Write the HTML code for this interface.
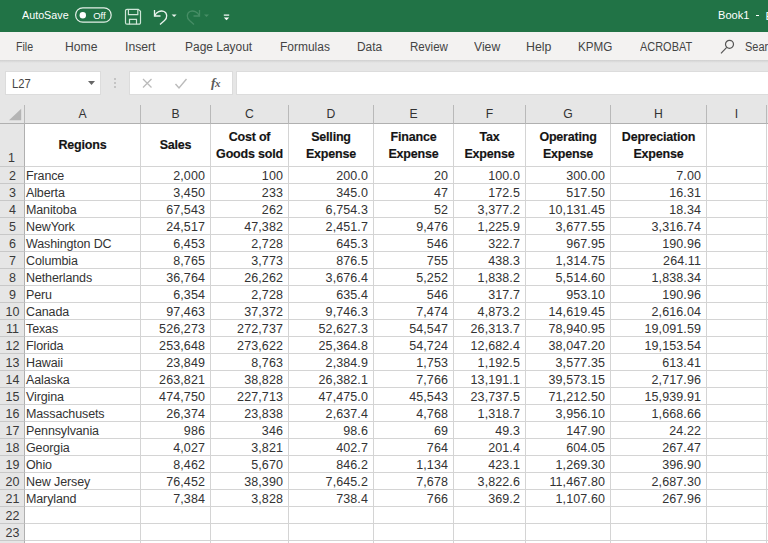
<!DOCTYPE html>
<html><head><meta charset="utf-8"><title>Excel</title>
<style>
html,body{margin:0;padding:0;}
body{width:768px;height:543px;overflow:hidden;position:relative;background:#e6e6e6;font-family:"Liberation Sans",sans-serif;}
.abs{position:absolute;}
#title{left:0;top:0;width:768px;height:32px;background:#217346;}
#title .t{position:absolute;color:#fff;font-size:11.5px;top:9px;white-space:nowrap;transform-origin:0 0;}
#ribbon{left:0;top:32px;width:768px;height:28px;background:#f3f2f1;}
#ribbon span{position:absolute;top:8px;font-size:12.5px;color:#444;white-space:nowrap;transform-origin:0 0;}
#shadow{left:0;top:60px;width:768px;height:3px;background:linear-gradient(#d0d0d0,#e6e6e6);}
#namebox{left:5px;top:71px;width:94px;height:22px;background:#fff;border:1px solid #dcdcdc;}
#fxbox{left:129px;top:71px;width:102px;height:22px;background:#fff;border:1px solid #dcdcdc;}
#fbar{left:236px;top:71px;width:540px;height:22px;background:#fff;border:1px solid #dcdcdc;}
#grid{left:0;top:105px;width:768px;height:438px;background:#fff;}
.ch{position:absolute;top:0;height:19px;padding-top:0.800px;background:#e6e6e6;border-right:1px solid #b9b9b9;border-bottom:1px solid #b0b0b0;box-sizing:border-box;text-align:center;font-size:12.200px;line-height:16px;color:#333;}
.rh{position:absolute;left:0;width:25px;background:#e6e6e6;border-right:1px solid #b0b0b0;border-bottom:1px solid #c8c8c8;box-sizing:border-box;text-align:center;font-size:12.500px;padding-left:1px;color:#3a3a3a;}
.c{position:absolute;box-sizing:border-box;border-right:1px solid #d4d4d4;border-bottom:1px solid #d4d4d4;font-size:12.5px;letter-spacing:-0.12px;line-height:17px;padding-top:0px;color:#333;white-space:nowrap;overflow:hidden;}
.h{font-weight:bold;text-align:center;font-size:12.5px;letter-spacing:-0.2px;line-height:16.7px;padding-top:2px;color:#141414;-webkit-text-stroke:0.15px #141414;display:flex;align-items:center;justify-content:center;}
.n{text-align:right;letter-spacing:0.1px;}
.t{display:inline-block;transform:translateY(0.6px);}
</style></head><body>
<div id="title" class="abs">
<span class="t" style="left:21.500px;transform:scaleX(0.935)">AutoSave</span>
<svg class="abs" style="left:74px;top:6px" width="40" height="20" viewBox="0 0 40 20"><rect x="1.600" y="1.800" width="35.600" height="14.400" rx="7.200" fill="none" stroke="#e4efe8" stroke-width="1.200"/><circle cx="8.800" cy="9.200" r="3.200" fill="#fff"/><text x="19.200" y="12.600" font-family="Liberation Sans" font-size="9.500" textLength="12.500" lengthAdjust="spacingAndGlyphs" fill="#fff">Off</text></svg>
<svg class="abs" style="left:124px;top:8px" width="18" height="18" viewBox="0 0 18 18" fill="none" stroke="#cfe6d8" stroke-width="1.200"><path d="M3 1.300h11.200l2.300 2v11.400a1.500 1.500 0 0 1 -1.500 1.500h-12a1.500 1.500 0 0 1 -1.500 -1.500v-11.900a1.500 1.500 0 0 1 1.500 -1.500z"/><path d="M4.400 1.300v5.400h9.400v-5.400M5.500 16.200v-4.900h7v4.900"/></svg>
<svg class="abs" style="left:152px;top:8px" width="28" height="18" viewBox="0 0 28 18" fill="none" stroke="#eaf4ee" stroke-width="1.3"><path d="M2.500 2v6h6"/><path d="M2.500 8c2-4 6-6 9.500-4.500c3.500 1.600 3.500 6.500 0.500 9l-4.500 4"/><path d="M19.600 6.500h5l-2.500 2.500z" fill="#eaf4ee" stroke="none"/></svg>
<svg class="abs" style="left:184px;top:8px" width="28" height="18" viewBox="0 0 28 18" fill="none" stroke="#468d65" stroke-width="1.3"><path d="M15.500 2v6h-6"/><path d="M15.500 8c-2-4-6-6-9.500-4.500c-3.500 1.600-3.500 6.500-0.500 9l4.500 4"/><path d="M20 6.500h5l-2.500 2.500z" fill="#468d65" stroke="none"/></svg>
<svg class="abs" style="left:222px;top:13.500px" width="10" height="8" viewBox="0 0 10 8"><rect x="1.800" y="0.500" width="5.400" height="1.200" fill="#fff"/><path d="M1.800 3.500h5.400l-2.700 2.700z" fill="#fff"/></svg>
<span class="t" style="left:718.200px;transform:scaleX(0.962)">Book1</span><div class="abs" style="left:755.500px;top:14.800px;width:3.700px;height:1.100px;background:#fff"></div><span class="t" style="left:765.500px">E</span>
</div>
<div id="ribbon" class="abs">
<span style="left:16.1px;transform:scaleX(0.850)">File</span><span style="left:65.0px;transform:scaleX(0.972)">Home</span><span style="left:124.9px;transform:scaleX(0.975)">Insert</span><span style="left:184.7px;transform:scaleX(0.957)">Page Layout</span><span style="left:280.0px;transform:scaleX(0.958)">Formulas</span><span style="left:357.3px;transform:scaleX(0.950)">Data</span><span style="left:410.0px;transform:scaleX(0.925)">Review</span><span style="left:474.1px;transform:scaleX(0.975)">View</span><span style="left:526.1px;transform:scaleX(0.988)">Help</span><span style="left:578.0px;transform:scaleX(0.935)">KPMG</span><span style="left:639.6px;transform:scaleX(0.876)">ACROBAT</span><span style="left:745.1px;transform:scaleX(0.880)">Search</span>
<svg class="abs" style="left:719px;top:6px" width="18" height="18" viewBox="0 0 18 18" fill="none" stroke="#555" stroke-width="1.200"><circle cx="10.500" cy="6.300" r="4"/><path d="M7.700 9.300l-5.700 6"/></svg>
</div>
<div id="shadow" class="abs"></div>
<div id="namebox" class="abs"><span class="abs" style="left:6px;top:5px;font-size:12.500px;color:#444;transform:scaleX(0.9);transform-origin:0 0">L27</span>
<svg class="abs" style="left:81px;top:8px" width="9" height="6" viewBox="0 0 9 6"><path d="M1 1h7l-3.500 4z" fill="#666"/></svg></div>
<svg class="abs" style="left:112px;top:77px" width="6" height="12" viewBox="0 0 6 12"><circle cx="3" cy="2" r="0.800" fill="#999"/><circle cx="3" cy="6" r="0.800" fill="#999"/><circle cx="3" cy="10" r="0.800" fill="#999"/></svg>
<div id="fxbox" class="abs">
<svg class="abs" style="left:11px;top:5px" width="13" height="13" viewBox="0 0 13 13" stroke="#bbb" stroke-width="1.300" fill="none"><path d="M2 2l8.500 8.500M10.500 2l-8.500 8.500"/></svg>
<svg class="abs" style="left:44px;top:5px" width="14" height="13" viewBox="0 0 14 13" stroke="#bbb" stroke-width="1.400" fill="none"><path d="M1.500 7l3.500 4l7.500-9"/></svg>
<span class="abs" style="left:81px;top:2.500px;font-family:'Liberation Serif',serif;font-style:italic;font-weight:bold;font-size:13.500px;color:#5a5a5a;letter-spacing:-0.500px">f<span style="font-size:11px;position:relative;top:0.500px">x</span></span>
</div>
<div id="fbar" class="abs"></div>
<div id="grid" class="abs">

<div class="ch" style="left:0;width:25px"><svg width="23" height="16" viewBox="0 0 23 16" style="position:absolute;left:0;top:0"><path d="M21.200 3.800v11.400h-12.200z" fill="#b5b5b5"/></svg></div>
<div class="ch" style="left:25px;width:116px">A</div>
<div class="ch" style="left:141px;width:70px">B</div>
<div class="ch" style="left:211px;width:78px">C</div>
<div class="ch" style="left:289px;width:85px">D</div>
<div class="ch" style="left:374px;width:80px">E</div>
<div class="ch" style="left:454px;width:72px">F</div>
<div class="ch" style="left:526px;width:85px">G</div>
<div class="ch" style="left:611px;width:96px">H</div>
<div class="ch" style="left:707px;width:60px">I</div>
<div class="ch" style="left:767px;width:64px">J</div>
<div class="rh" style="top:19px;height:43px;line-height:43px"><span style="position:absolute;left:0;width:23px;bottom:0px;line-height:16px">1</span></div>
<div class="c h" style="left:25px;top:19px;width:116px;height:43px;padding-top:0px;"><span>Regions</span></div>
<div class="c h" style="left:141px;top:19px;width:70px;height:43px;padding-top:0px;"><span>Sales</span></div>
<div class="c h" style="left:211px;top:19px;width:78px;height:43px;"><span>Cost of<br>Goods sold</span></div>
<div class="c h" style="left:289px;top:19px;width:85px;height:43px;"><span>Selling<br>Expense</span></div>
<div class="c h" style="left:374px;top:19px;width:80px;height:43px;"><span>Finance<br>Expense</span></div>
<div class="c h" style="left:454px;top:19px;width:72px;height:43px;"><span>Tax<br>Expense</span></div>
<div class="c h" style="left:526px;top:19px;width:85px;height:43px;"><span>Operating<br>Expense</span></div>
<div class="c h" style="left:611px;top:19px;width:96px;height:43px;"><span>Depreciation<br>Expense</span></div>
<div class="c h" style="left:707px;top:19px;width:60px;height:43px;padding-top:0px;"><span></span></div>
<div class="c h" style="left:767px;top:19px;width:64px;height:43px;padding-top:0px;"><span></span></div>
<div class="rh" style="top:62px;height:17px;line-height:17px"><span style="display:inline-block;position:relative;top:1px">2</span></div>
<div class="c" style="left:25px;top:62px;width:116px;height:17px;padding-left:1px"><span class="t">France</span></div>
<div class="c n" style="left:141px;top:62px;width:70px;height:17px;padding-right:5px"><span class="t">2,000</span></div>
<div class="c n" style="left:211px;top:62px;width:78px;height:17px;padding-right:5px"><span class="t">100</span></div>
<div class="c n" style="left:289px;top:62px;width:85px;height:17px;padding-right:5px"><span class="t">200.0</span></div>
<div class="c n" style="left:374px;top:62px;width:80px;height:17px;padding-right:5px"><span class="t">20</span></div>
<div class="c n" style="left:454px;top:62px;width:72px;height:17px;padding-right:5px"><span class="t">100.0</span></div>
<div class="c n" style="left:526px;top:62px;width:85px;height:17px;padding-right:5px"><span class="t">300.00</span></div>
<div class="c n" style="left:611px;top:62px;width:96px;height:17px;padding-right:5px"><span class="t">7.00</span></div>
<div class="c" style="left:707px;top:62px;width:60px;height:17px"></div>
<div class="c" style="left:767px;top:62px;width:64px;height:17px"></div>
<div class="rh" style="top:79px;height:17px;line-height:17px"><span style="display:inline-block;position:relative;top:1px">3</span></div>
<div class="c" style="left:25px;top:79px;width:116px;height:17px;padding-left:1px"><span class="t">Alberta</span></div>
<div class="c n" style="left:141px;top:79px;width:70px;height:17px;padding-right:5px"><span class="t">3,450</span></div>
<div class="c n" style="left:211px;top:79px;width:78px;height:17px;padding-right:5px"><span class="t">233</span></div>
<div class="c n" style="left:289px;top:79px;width:85px;height:17px;padding-right:5px"><span class="t">345.0</span></div>
<div class="c n" style="left:374px;top:79px;width:80px;height:17px;padding-right:5px"><span class="t">47</span></div>
<div class="c n" style="left:454px;top:79px;width:72px;height:17px;padding-right:5px"><span class="t">172.5</span></div>
<div class="c n" style="left:526px;top:79px;width:85px;height:17px;padding-right:5px"><span class="t">517.50</span></div>
<div class="c n" style="left:611px;top:79px;width:96px;height:17px;padding-right:5px"><span class="t">16.31</span></div>
<div class="c" style="left:707px;top:79px;width:60px;height:17px"></div>
<div class="c" style="left:767px;top:79px;width:64px;height:17px"></div>
<div class="rh" style="top:96px;height:17px;line-height:17px"><span style="display:inline-block;position:relative;top:1px">4</span></div>
<div class="c" style="left:25px;top:96px;width:116px;height:17px;padding-left:1px"><span class="t">Manitoba</span></div>
<div class="c n" style="left:141px;top:96px;width:70px;height:17px;padding-right:5px"><span class="t">67,543</span></div>
<div class="c n" style="left:211px;top:96px;width:78px;height:17px;padding-right:5px"><span class="t">262</span></div>
<div class="c n" style="left:289px;top:96px;width:85px;height:17px;padding-right:5px"><span class="t">6,754.3</span></div>
<div class="c n" style="left:374px;top:96px;width:80px;height:17px;padding-right:5px"><span class="t">52</span></div>
<div class="c n" style="left:454px;top:96px;width:72px;height:17px;padding-right:5px"><span class="t">3,377.2</span></div>
<div class="c n" style="left:526px;top:96px;width:85px;height:17px;padding-right:5px"><span class="t">10,131.45</span></div>
<div class="c n" style="left:611px;top:96px;width:96px;height:17px;padding-right:5px"><span class="t">18.34</span></div>
<div class="c" style="left:707px;top:96px;width:60px;height:17px"></div>
<div class="c" style="left:767px;top:96px;width:64px;height:17px"></div>
<div class="rh" style="top:113px;height:17px;line-height:17px"><span style="display:inline-block;position:relative;top:1px">5</span></div>
<div class="c" style="left:25px;top:113px;width:116px;height:17px;padding-left:1px"><span class="t">NewYork</span></div>
<div class="c n" style="left:141px;top:113px;width:70px;height:17px;padding-right:5px"><span class="t">24,517</span></div>
<div class="c n" style="left:211px;top:113px;width:78px;height:17px;padding-right:5px"><span class="t">47,382</span></div>
<div class="c n" style="left:289px;top:113px;width:85px;height:17px;padding-right:5px"><span class="t">2,451.7</span></div>
<div class="c n" style="left:374px;top:113px;width:80px;height:17px;padding-right:5px"><span class="t">9,476</span></div>
<div class="c n" style="left:454px;top:113px;width:72px;height:17px;padding-right:5px"><span class="t">1,225.9</span></div>
<div class="c n" style="left:526px;top:113px;width:85px;height:17px;padding-right:5px"><span class="t">3,677.55</span></div>
<div class="c n" style="left:611px;top:113px;width:96px;height:17px;padding-right:5px"><span class="t">3,316.74</span></div>
<div class="c" style="left:707px;top:113px;width:60px;height:17px"></div>
<div class="c" style="left:767px;top:113px;width:64px;height:17px"></div>
<div class="rh" style="top:130px;height:17px;line-height:17px"><span style="display:inline-block;position:relative;top:1px">6</span></div>
<div class="c" style="left:25px;top:130px;width:116px;height:17px;padding-left:1px"><span class="t">Washington DC</span></div>
<div class="c n" style="left:141px;top:130px;width:70px;height:17px;padding-right:5px"><span class="t">6,453</span></div>
<div class="c n" style="left:211px;top:130px;width:78px;height:17px;padding-right:5px"><span class="t">2,728</span></div>
<div class="c n" style="left:289px;top:130px;width:85px;height:17px;padding-right:5px"><span class="t">645.3</span></div>
<div class="c n" style="left:374px;top:130px;width:80px;height:17px;padding-right:5px"><span class="t">546</span></div>
<div class="c n" style="left:454px;top:130px;width:72px;height:17px;padding-right:5px"><span class="t">322.7</span></div>
<div class="c n" style="left:526px;top:130px;width:85px;height:17px;padding-right:5px"><span class="t">967.95</span></div>
<div class="c n" style="left:611px;top:130px;width:96px;height:17px;padding-right:5px"><span class="t">190.96</span></div>
<div class="c" style="left:707px;top:130px;width:60px;height:17px"></div>
<div class="c" style="left:767px;top:130px;width:64px;height:17px"></div>
<div class="rh" style="top:147px;height:17px;line-height:17px"><span style="display:inline-block;position:relative;top:1px">7</span></div>
<div class="c" style="left:25px;top:147px;width:116px;height:17px;padding-left:1px"><span class="t">Columbia</span></div>
<div class="c n" style="left:141px;top:147px;width:70px;height:17px;padding-right:5px"><span class="t">8,765</span></div>
<div class="c n" style="left:211px;top:147px;width:78px;height:17px;padding-right:5px"><span class="t">3,773</span></div>
<div class="c n" style="left:289px;top:147px;width:85px;height:17px;padding-right:5px"><span class="t">876.5</span></div>
<div class="c n" style="left:374px;top:147px;width:80px;height:17px;padding-right:5px"><span class="t">755</span></div>
<div class="c n" style="left:454px;top:147px;width:72px;height:17px;padding-right:5px"><span class="t">438.3</span></div>
<div class="c n" style="left:526px;top:147px;width:85px;height:17px;padding-right:5px"><span class="t">1,314.75</span></div>
<div class="c n" style="left:611px;top:147px;width:96px;height:17px;padding-right:5px"><span class="t">264.11</span></div>
<div class="c" style="left:707px;top:147px;width:60px;height:17px"></div>
<div class="c" style="left:767px;top:147px;width:64px;height:17px"></div>
<div class="rh" style="top:164px;height:17px;line-height:17px"><span style="display:inline-block;position:relative;top:1px">8</span></div>
<div class="c" style="left:25px;top:164px;width:116px;height:17px;padding-left:1px"><span class="t">Netherlands</span></div>
<div class="c n" style="left:141px;top:164px;width:70px;height:17px;padding-right:5px"><span class="t">36,764</span></div>
<div class="c n" style="left:211px;top:164px;width:78px;height:17px;padding-right:5px"><span class="t">26,262</span></div>
<div class="c n" style="left:289px;top:164px;width:85px;height:17px;padding-right:5px"><span class="t">3,676.4</span></div>
<div class="c n" style="left:374px;top:164px;width:80px;height:17px;padding-right:5px"><span class="t">5,252</span></div>
<div class="c n" style="left:454px;top:164px;width:72px;height:17px;padding-right:5px"><span class="t">1,838.2</span></div>
<div class="c n" style="left:526px;top:164px;width:85px;height:17px;padding-right:5px"><span class="t">5,514.60</span></div>
<div class="c n" style="left:611px;top:164px;width:96px;height:17px;padding-right:5px"><span class="t">1,838.34</span></div>
<div class="c" style="left:707px;top:164px;width:60px;height:17px"></div>
<div class="c" style="left:767px;top:164px;width:64px;height:17px"></div>
<div class="rh" style="top:181px;height:17px;line-height:17px"><span style="display:inline-block;position:relative;top:1px">9</span></div>
<div class="c" style="left:25px;top:181px;width:116px;height:17px;padding-left:1px"><span class="t">Peru</span></div>
<div class="c n" style="left:141px;top:181px;width:70px;height:17px;padding-right:5px"><span class="t">6,354</span></div>
<div class="c n" style="left:211px;top:181px;width:78px;height:17px;padding-right:5px"><span class="t">2,728</span></div>
<div class="c n" style="left:289px;top:181px;width:85px;height:17px;padding-right:5px"><span class="t">635.4</span></div>
<div class="c n" style="left:374px;top:181px;width:80px;height:17px;padding-right:5px"><span class="t">546</span></div>
<div class="c n" style="left:454px;top:181px;width:72px;height:17px;padding-right:5px"><span class="t">317.7</span></div>
<div class="c n" style="left:526px;top:181px;width:85px;height:17px;padding-right:5px"><span class="t">953.10</span></div>
<div class="c n" style="left:611px;top:181px;width:96px;height:17px;padding-right:5px"><span class="t">190.96</span></div>
<div class="c" style="left:707px;top:181px;width:60px;height:17px"></div>
<div class="c" style="left:767px;top:181px;width:64px;height:17px"></div>
<div class="rh" style="top:198px;height:17px;line-height:17px"><span style="display:inline-block;position:relative;top:1px">10</span></div>
<div class="c" style="left:25px;top:198px;width:116px;height:17px;padding-left:1px"><span class="t">Canada</span></div>
<div class="c n" style="left:141px;top:198px;width:70px;height:17px;padding-right:5px"><span class="t">97,463</span></div>
<div class="c n" style="left:211px;top:198px;width:78px;height:17px;padding-right:5px"><span class="t">37,372</span></div>
<div class="c n" style="left:289px;top:198px;width:85px;height:17px;padding-right:5px"><span class="t">9,746.3</span></div>
<div class="c n" style="left:374px;top:198px;width:80px;height:17px;padding-right:5px"><span class="t">7,474</span></div>
<div class="c n" style="left:454px;top:198px;width:72px;height:17px;padding-right:5px"><span class="t">4,873.2</span></div>
<div class="c n" style="left:526px;top:198px;width:85px;height:17px;padding-right:5px"><span class="t">14,619.45</span></div>
<div class="c n" style="left:611px;top:198px;width:96px;height:17px;padding-right:5px"><span class="t">2,616.04</span></div>
<div class="c" style="left:707px;top:198px;width:60px;height:17px"></div>
<div class="c" style="left:767px;top:198px;width:64px;height:17px"></div>
<div class="rh" style="top:215px;height:17px;line-height:17px"><span style="display:inline-block;position:relative;top:1px">11</span></div>
<div class="c" style="left:25px;top:215px;width:116px;height:17px;padding-left:1px"><span class="t">Texas</span></div>
<div class="c n" style="left:141px;top:215px;width:70px;height:17px;padding-right:5px"><span class="t">526,273</span></div>
<div class="c n" style="left:211px;top:215px;width:78px;height:17px;padding-right:5px"><span class="t">272,737</span></div>
<div class="c n" style="left:289px;top:215px;width:85px;height:17px;padding-right:5px"><span class="t">52,627.3</span></div>
<div class="c n" style="left:374px;top:215px;width:80px;height:17px;padding-right:5px"><span class="t">54,547</span></div>
<div class="c n" style="left:454px;top:215px;width:72px;height:17px;padding-right:5px"><span class="t">26,313.7</span></div>
<div class="c n" style="left:526px;top:215px;width:85px;height:17px;padding-right:5px"><span class="t">78,940.95</span></div>
<div class="c n" style="left:611px;top:215px;width:96px;height:17px;padding-right:5px"><span class="t">19,091.59</span></div>
<div class="c" style="left:707px;top:215px;width:60px;height:17px"></div>
<div class="c" style="left:767px;top:215px;width:64px;height:17px"></div>
<div class="rh" style="top:232px;height:17px;line-height:17px"><span style="display:inline-block;position:relative;top:1px">12</span></div>
<div class="c" style="left:25px;top:232px;width:116px;height:17px;padding-left:1px"><span class="t">Florida</span></div>
<div class="c n" style="left:141px;top:232px;width:70px;height:17px;padding-right:5px"><span class="t">253,648</span></div>
<div class="c n" style="left:211px;top:232px;width:78px;height:17px;padding-right:5px"><span class="t">273,622</span></div>
<div class="c n" style="left:289px;top:232px;width:85px;height:17px;padding-right:5px"><span class="t">25,364.8</span></div>
<div class="c n" style="left:374px;top:232px;width:80px;height:17px;padding-right:5px"><span class="t">54,724</span></div>
<div class="c n" style="left:454px;top:232px;width:72px;height:17px;padding-right:5px"><span class="t">12,682.4</span></div>
<div class="c n" style="left:526px;top:232px;width:85px;height:17px;padding-right:5px"><span class="t">38,047.20</span></div>
<div class="c n" style="left:611px;top:232px;width:96px;height:17px;padding-right:5px"><span class="t">19,153.54</span></div>
<div class="c" style="left:707px;top:232px;width:60px;height:17px"></div>
<div class="c" style="left:767px;top:232px;width:64px;height:17px"></div>
<div class="rh" style="top:249px;height:17px;line-height:17px"><span style="display:inline-block;position:relative;top:1px">13</span></div>
<div class="c" style="left:25px;top:249px;width:116px;height:17px;padding-left:1px"><span class="t">Hawaii</span></div>
<div class="c n" style="left:141px;top:249px;width:70px;height:17px;padding-right:5px"><span class="t">23,849</span></div>
<div class="c n" style="left:211px;top:249px;width:78px;height:17px;padding-right:5px"><span class="t">8,763</span></div>
<div class="c n" style="left:289px;top:249px;width:85px;height:17px;padding-right:5px"><span class="t">2,384.9</span></div>
<div class="c n" style="left:374px;top:249px;width:80px;height:17px;padding-right:5px"><span class="t">1,753</span></div>
<div class="c n" style="left:454px;top:249px;width:72px;height:17px;padding-right:5px"><span class="t">1,192.5</span></div>
<div class="c n" style="left:526px;top:249px;width:85px;height:17px;padding-right:5px"><span class="t">3,577.35</span></div>
<div class="c n" style="left:611px;top:249px;width:96px;height:17px;padding-right:5px"><span class="t">613.41</span></div>
<div class="c" style="left:707px;top:249px;width:60px;height:17px"></div>
<div class="c" style="left:767px;top:249px;width:64px;height:17px"></div>
<div class="rh" style="top:266px;height:17px;line-height:17px"><span style="display:inline-block;position:relative;top:1px">14</span></div>
<div class="c" style="left:25px;top:266px;width:116px;height:17px;padding-left:1px"><span class="t">Aalaska</span></div>
<div class="c n" style="left:141px;top:266px;width:70px;height:17px;padding-right:5px"><span class="t">263,821</span></div>
<div class="c n" style="left:211px;top:266px;width:78px;height:17px;padding-right:5px"><span class="t">38,828</span></div>
<div class="c n" style="left:289px;top:266px;width:85px;height:17px;padding-right:5px"><span class="t">26,382.1</span></div>
<div class="c n" style="left:374px;top:266px;width:80px;height:17px;padding-right:5px"><span class="t">7,766</span></div>
<div class="c n" style="left:454px;top:266px;width:72px;height:17px;padding-right:5px"><span class="t">13,191.1</span></div>
<div class="c n" style="left:526px;top:266px;width:85px;height:17px;padding-right:5px"><span class="t">39,573.15</span></div>
<div class="c n" style="left:611px;top:266px;width:96px;height:17px;padding-right:5px"><span class="t">2,717.96</span></div>
<div class="c" style="left:707px;top:266px;width:60px;height:17px"></div>
<div class="c" style="left:767px;top:266px;width:64px;height:17px"></div>
<div class="rh" style="top:283px;height:17px;line-height:17px"><span style="display:inline-block;position:relative;top:1px">15</span></div>
<div class="c" style="left:25px;top:283px;width:116px;height:17px;padding-left:1px"><span class="t">Virgina</span></div>
<div class="c n" style="left:141px;top:283px;width:70px;height:17px;padding-right:5px"><span class="t">474,750</span></div>
<div class="c n" style="left:211px;top:283px;width:78px;height:17px;padding-right:5px"><span class="t">227,713</span></div>
<div class="c n" style="left:289px;top:283px;width:85px;height:17px;padding-right:5px"><span class="t">47,475.0</span></div>
<div class="c n" style="left:374px;top:283px;width:80px;height:17px;padding-right:5px"><span class="t">45,543</span></div>
<div class="c n" style="left:454px;top:283px;width:72px;height:17px;padding-right:5px"><span class="t">23,737.5</span></div>
<div class="c n" style="left:526px;top:283px;width:85px;height:17px;padding-right:5px"><span class="t">71,212.50</span></div>
<div class="c n" style="left:611px;top:283px;width:96px;height:17px;padding-right:5px"><span class="t">15,939.91</span></div>
<div class="c" style="left:707px;top:283px;width:60px;height:17px"></div>
<div class="c" style="left:767px;top:283px;width:64px;height:17px"></div>
<div class="rh" style="top:300px;height:17px;line-height:17px"><span style="display:inline-block;position:relative;top:1px">16</span></div>
<div class="c" style="left:25px;top:300px;width:116px;height:17px;padding-left:1px"><span class="t">Massachusets</span></div>
<div class="c n" style="left:141px;top:300px;width:70px;height:17px;padding-right:5px"><span class="t">26,374</span></div>
<div class="c n" style="left:211px;top:300px;width:78px;height:17px;padding-right:5px"><span class="t">23,838</span></div>
<div class="c n" style="left:289px;top:300px;width:85px;height:17px;padding-right:5px"><span class="t">2,637.4</span></div>
<div class="c n" style="left:374px;top:300px;width:80px;height:17px;padding-right:5px"><span class="t">4,768</span></div>
<div class="c n" style="left:454px;top:300px;width:72px;height:17px;padding-right:5px"><span class="t">1,318.7</span></div>
<div class="c n" style="left:526px;top:300px;width:85px;height:17px;padding-right:5px"><span class="t">3,956.10</span></div>
<div class="c n" style="left:611px;top:300px;width:96px;height:17px;padding-right:5px"><span class="t">1,668.66</span></div>
<div class="c" style="left:707px;top:300px;width:60px;height:17px"></div>
<div class="c" style="left:767px;top:300px;width:64px;height:17px"></div>
<div class="rh" style="top:317px;height:17px;line-height:17px"><span style="display:inline-block;position:relative;top:1px">17</span></div>
<div class="c" style="left:25px;top:317px;width:116px;height:17px;padding-left:1px"><span class="t">Pennsylvania</span></div>
<div class="c n" style="left:141px;top:317px;width:70px;height:17px;padding-right:5px"><span class="t">986</span></div>
<div class="c n" style="left:211px;top:317px;width:78px;height:17px;padding-right:5px"><span class="t">346</span></div>
<div class="c n" style="left:289px;top:317px;width:85px;height:17px;padding-right:5px"><span class="t">98.6</span></div>
<div class="c n" style="left:374px;top:317px;width:80px;height:17px;padding-right:5px"><span class="t">69</span></div>
<div class="c n" style="left:454px;top:317px;width:72px;height:17px;padding-right:5px"><span class="t">49.3</span></div>
<div class="c n" style="left:526px;top:317px;width:85px;height:17px;padding-right:5px"><span class="t">147.90</span></div>
<div class="c n" style="left:611px;top:317px;width:96px;height:17px;padding-right:5px"><span class="t">24.22</span></div>
<div class="c" style="left:707px;top:317px;width:60px;height:17px"></div>
<div class="c" style="left:767px;top:317px;width:64px;height:17px"></div>
<div class="rh" style="top:334px;height:17px;line-height:17px"><span style="display:inline-block;position:relative;top:1px">18</span></div>
<div class="c" style="left:25px;top:334px;width:116px;height:17px;padding-left:1px"><span class="t">Georgia</span></div>
<div class="c n" style="left:141px;top:334px;width:70px;height:17px;padding-right:5px"><span class="t">4,027</span></div>
<div class="c n" style="left:211px;top:334px;width:78px;height:17px;padding-right:5px"><span class="t">3,821</span></div>
<div class="c n" style="left:289px;top:334px;width:85px;height:17px;padding-right:5px"><span class="t">402.7</span></div>
<div class="c n" style="left:374px;top:334px;width:80px;height:17px;padding-right:5px"><span class="t">764</span></div>
<div class="c n" style="left:454px;top:334px;width:72px;height:17px;padding-right:5px"><span class="t">201.4</span></div>
<div class="c n" style="left:526px;top:334px;width:85px;height:17px;padding-right:5px"><span class="t">604.05</span></div>
<div class="c n" style="left:611px;top:334px;width:96px;height:17px;padding-right:5px"><span class="t">267.47</span></div>
<div class="c" style="left:707px;top:334px;width:60px;height:17px"></div>
<div class="c" style="left:767px;top:334px;width:64px;height:17px"></div>
<div class="rh" style="top:351px;height:17px;line-height:17px"><span style="display:inline-block;position:relative;top:1px">19</span></div>
<div class="c" style="left:25px;top:351px;width:116px;height:17px;padding-left:1px"><span class="t">Ohio</span></div>
<div class="c n" style="left:141px;top:351px;width:70px;height:17px;padding-right:5px"><span class="t">8,462</span></div>
<div class="c n" style="left:211px;top:351px;width:78px;height:17px;padding-right:5px"><span class="t">5,670</span></div>
<div class="c n" style="left:289px;top:351px;width:85px;height:17px;padding-right:5px"><span class="t">846.2</span></div>
<div class="c n" style="left:374px;top:351px;width:80px;height:17px;padding-right:5px"><span class="t">1,134</span></div>
<div class="c n" style="left:454px;top:351px;width:72px;height:17px;padding-right:5px"><span class="t">423.1</span></div>
<div class="c n" style="left:526px;top:351px;width:85px;height:17px;padding-right:5px"><span class="t">1,269.30</span></div>
<div class="c n" style="left:611px;top:351px;width:96px;height:17px;padding-right:5px"><span class="t">396.90</span></div>
<div class="c" style="left:707px;top:351px;width:60px;height:17px"></div>
<div class="c" style="left:767px;top:351px;width:64px;height:17px"></div>
<div class="rh" style="top:368px;height:17px;line-height:17px"><span style="display:inline-block;position:relative;top:1px">20</span></div>
<div class="c" style="left:25px;top:368px;width:116px;height:17px;padding-left:1px"><span class="t">New Jersey</span></div>
<div class="c n" style="left:141px;top:368px;width:70px;height:17px;padding-right:5px"><span class="t">76,452</span></div>
<div class="c n" style="left:211px;top:368px;width:78px;height:17px;padding-right:5px"><span class="t">38,390</span></div>
<div class="c n" style="left:289px;top:368px;width:85px;height:17px;padding-right:5px"><span class="t">7,645.2</span></div>
<div class="c n" style="left:374px;top:368px;width:80px;height:17px;padding-right:5px"><span class="t">7,678</span></div>
<div class="c n" style="left:454px;top:368px;width:72px;height:17px;padding-right:5px"><span class="t">3,822.6</span></div>
<div class="c n" style="left:526px;top:368px;width:85px;height:17px;padding-right:5px"><span class="t">11,467.80</span></div>
<div class="c n" style="left:611px;top:368px;width:96px;height:17px;padding-right:5px"><span class="t">2,687.30</span></div>
<div class="c" style="left:707px;top:368px;width:60px;height:17px"></div>
<div class="c" style="left:767px;top:368px;width:64px;height:17px"></div>
<div class="rh" style="top:385px;height:17px;line-height:17px"><span style="display:inline-block;position:relative;top:1px">21</span></div>
<div class="c" style="left:25px;top:385px;width:116px;height:17px;padding-left:1px"><span class="t">Maryland</span></div>
<div class="c n" style="left:141px;top:385px;width:70px;height:17px;padding-right:5px"><span class="t">7,384</span></div>
<div class="c n" style="left:211px;top:385px;width:78px;height:17px;padding-right:5px"><span class="t">3,828</span></div>
<div class="c n" style="left:289px;top:385px;width:85px;height:17px;padding-right:5px"><span class="t">738.4</span></div>
<div class="c n" style="left:374px;top:385px;width:80px;height:17px;padding-right:5px"><span class="t">766</span></div>
<div class="c n" style="left:454px;top:385px;width:72px;height:17px;padding-right:5px"><span class="t">369.2</span></div>
<div class="c n" style="left:526px;top:385px;width:85px;height:17px;padding-right:5px"><span class="t">1,107.60</span></div>
<div class="c n" style="left:611px;top:385px;width:96px;height:17px;padding-right:5px"><span class="t">267.96</span></div>
<div class="c" style="left:707px;top:385px;width:60px;height:17px"></div>
<div class="c" style="left:767px;top:385px;width:64px;height:17px"></div>
<div class="rh" style="top:402px;height:17px;line-height:17px"><span style="display:inline-block;position:relative;top:1px">22</span></div>
<div class="c" style="left:25px;top:402px;width:116px;height:17px"></div>
<div class="c" style="left:141px;top:402px;width:70px;height:17px"></div>
<div class="c" style="left:211px;top:402px;width:78px;height:17px"></div>
<div class="c" style="left:289px;top:402px;width:85px;height:17px"></div>
<div class="c" style="left:374px;top:402px;width:80px;height:17px"></div>
<div class="c" style="left:454px;top:402px;width:72px;height:17px"></div>
<div class="c" style="left:526px;top:402px;width:85px;height:17px"></div>
<div class="c" style="left:611px;top:402px;width:96px;height:17px"></div>
<div class="c" style="left:707px;top:402px;width:60px;height:17px"></div>
<div class="c" style="left:767px;top:402px;width:64px;height:17px"></div>
<div class="rh" style="top:419px;height:17px;line-height:17px"><span style="display:inline-block;position:relative;top:1px">23</span></div>
<div class="c" style="left:25px;top:419px;width:116px;height:17px"></div>
<div class="c" style="left:141px;top:419px;width:70px;height:17px"></div>
<div class="c" style="left:211px;top:419px;width:78px;height:17px"></div>
<div class="c" style="left:289px;top:419px;width:85px;height:17px"></div>
<div class="c" style="left:374px;top:419px;width:80px;height:17px"></div>
<div class="c" style="left:454px;top:419px;width:72px;height:17px"></div>
<div class="c" style="left:526px;top:419px;width:85px;height:17px"></div>
<div class="c" style="left:611px;top:419px;width:96px;height:17px"></div>
<div class="c" style="left:707px;top:419px;width:60px;height:17px"></div>
<div class="c" style="left:767px;top:419px;width:64px;height:17px"></div>
<div class="rh" style="top:436px;height:17px;line-height:17px"><span style="display:inline-block;position:relative;top:1px">24</span></div>
<div class="c" style="left:25px;top:436px;width:116px;height:17px"></div>
<div class="c" style="left:141px;top:436px;width:70px;height:17px"></div>
<div class="c" style="left:211px;top:436px;width:78px;height:17px"></div>
<div class="c" style="left:289px;top:436px;width:85px;height:17px"></div>
<div class="c" style="left:374px;top:436px;width:80px;height:17px"></div>
<div class="c" style="left:454px;top:436px;width:72px;height:17px"></div>
<div class="c" style="left:526px;top:436px;width:85px;height:17px"></div>
<div class="c" style="left:611px;top:436px;width:96px;height:17px"></div>
<div class="c" style="left:707px;top:436px;width:60px;height:17px"></div>
<div class="c" style="left:767px;top:436px;width:64px;height:17px"></div>
<div class="rh" style="top:453px;height:17px;line-height:17px"><span style="display:inline-block;position:relative;top:1px">25</span></div>
<div class="c" style="left:25px;top:453px;width:116px;height:17px"></div>
<div class="c" style="left:141px;top:453px;width:70px;height:17px"></div>
<div class="c" style="left:211px;top:453px;width:78px;height:17px"></div>
<div class="c" style="left:289px;top:453px;width:85px;height:17px"></div>
<div class="c" style="left:374px;top:453px;width:80px;height:17px"></div>
<div class="c" style="left:454px;top:453px;width:72px;height:17px"></div>
<div class="c" style="left:526px;top:453px;width:85px;height:17px"></div>
<div class="c" style="left:611px;top:453px;width:96px;height:17px"></div>
<div class="c" style="left:707px;top:453px;width:60px;height:17px"></div>
<div class="c" style="left:767px;top:453px;width:64px;height:17px"></div>
</div></body></html>
